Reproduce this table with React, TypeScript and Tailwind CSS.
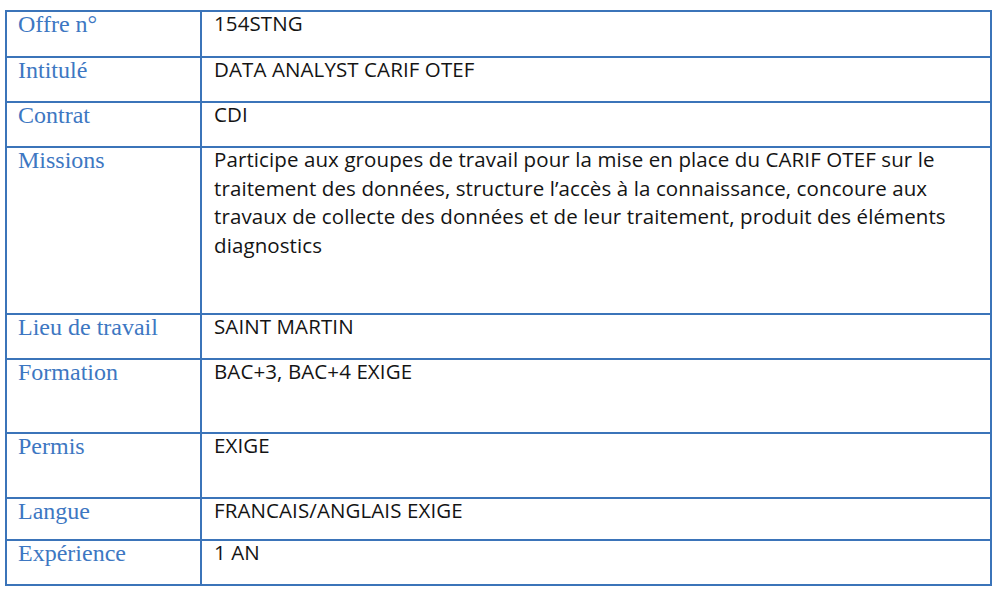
const rows = [
    { label: 'Offre n°', value: '154STNG', h: 'h-[46px]' },
    { label: 'Intitulé', value: 'DATA ANALYST CARIF OTEF', h: 'h-[45px]' },
    { label: 'Contrat', value: 'CDI', h: 'h-[45px]' },
    {
        label: 'Missions',
        value: 'Participe aux groupes de travail pour la mise en place du CARIF OTEF sur le traitement des données, structure l’accès à la connaissance, concoure aux travaux de collecte des données et de leur traitement, produit des éléments diagnostics',
        h: 'h-[167px]'
    },
    { label: 'Lieu de travail', value: 'SAINT MARTIN', h: 'h-[45px]' },
    { label: 'Formation', value: 'BAC+3, BAC+4 EXIGE', h: 'h-[74px]' },
    { label: 'Permis', value: 'EXIGE', h: 'h-[65px]' },
    { label: 'Langue', value: 'FRANCAIS/ANGLAIS EXIGE', h: 'h-[42px]' },
    { label: 'Expérience', value: '1 AN', h: 'h-[45px]' },
]

export default function App() {
    return (
        <div className="w-[1000px] h-[594px] bg-white pt-[10px] pl-[5px]">
            <div className="w-[987px] border-t-2 border-x-2 border-[#3b74b9]">
                {rows.map((row) => (
                    <div key={row.label} className={`flex border-b-2 border-[#3b74b9] ${row.h}`}>
                        <div className="w-[195px] shrink-0 border-r-2 border-[#3b74b9] pl-[11px]">
                            <div className="-mt-[2px] text-[24px] leading-[28px] text-[#3d77c2] font-['Liberation_Serif',serif]">
                                {row.label}
                            </div>
                        </div>
                        <div className="flex-1 pl-[12px] pr-[8px]">
                            <div className="-mt-[3px] text-[20.5px] leading-[28.5px] tracking-[0.1px] text-[#141414] font-['Open_Sans',sans-serif]">
                                {row.value}
                            </div>
                        </div>
                    </div>
                ))}
            </div>
        </div>
    )
}
